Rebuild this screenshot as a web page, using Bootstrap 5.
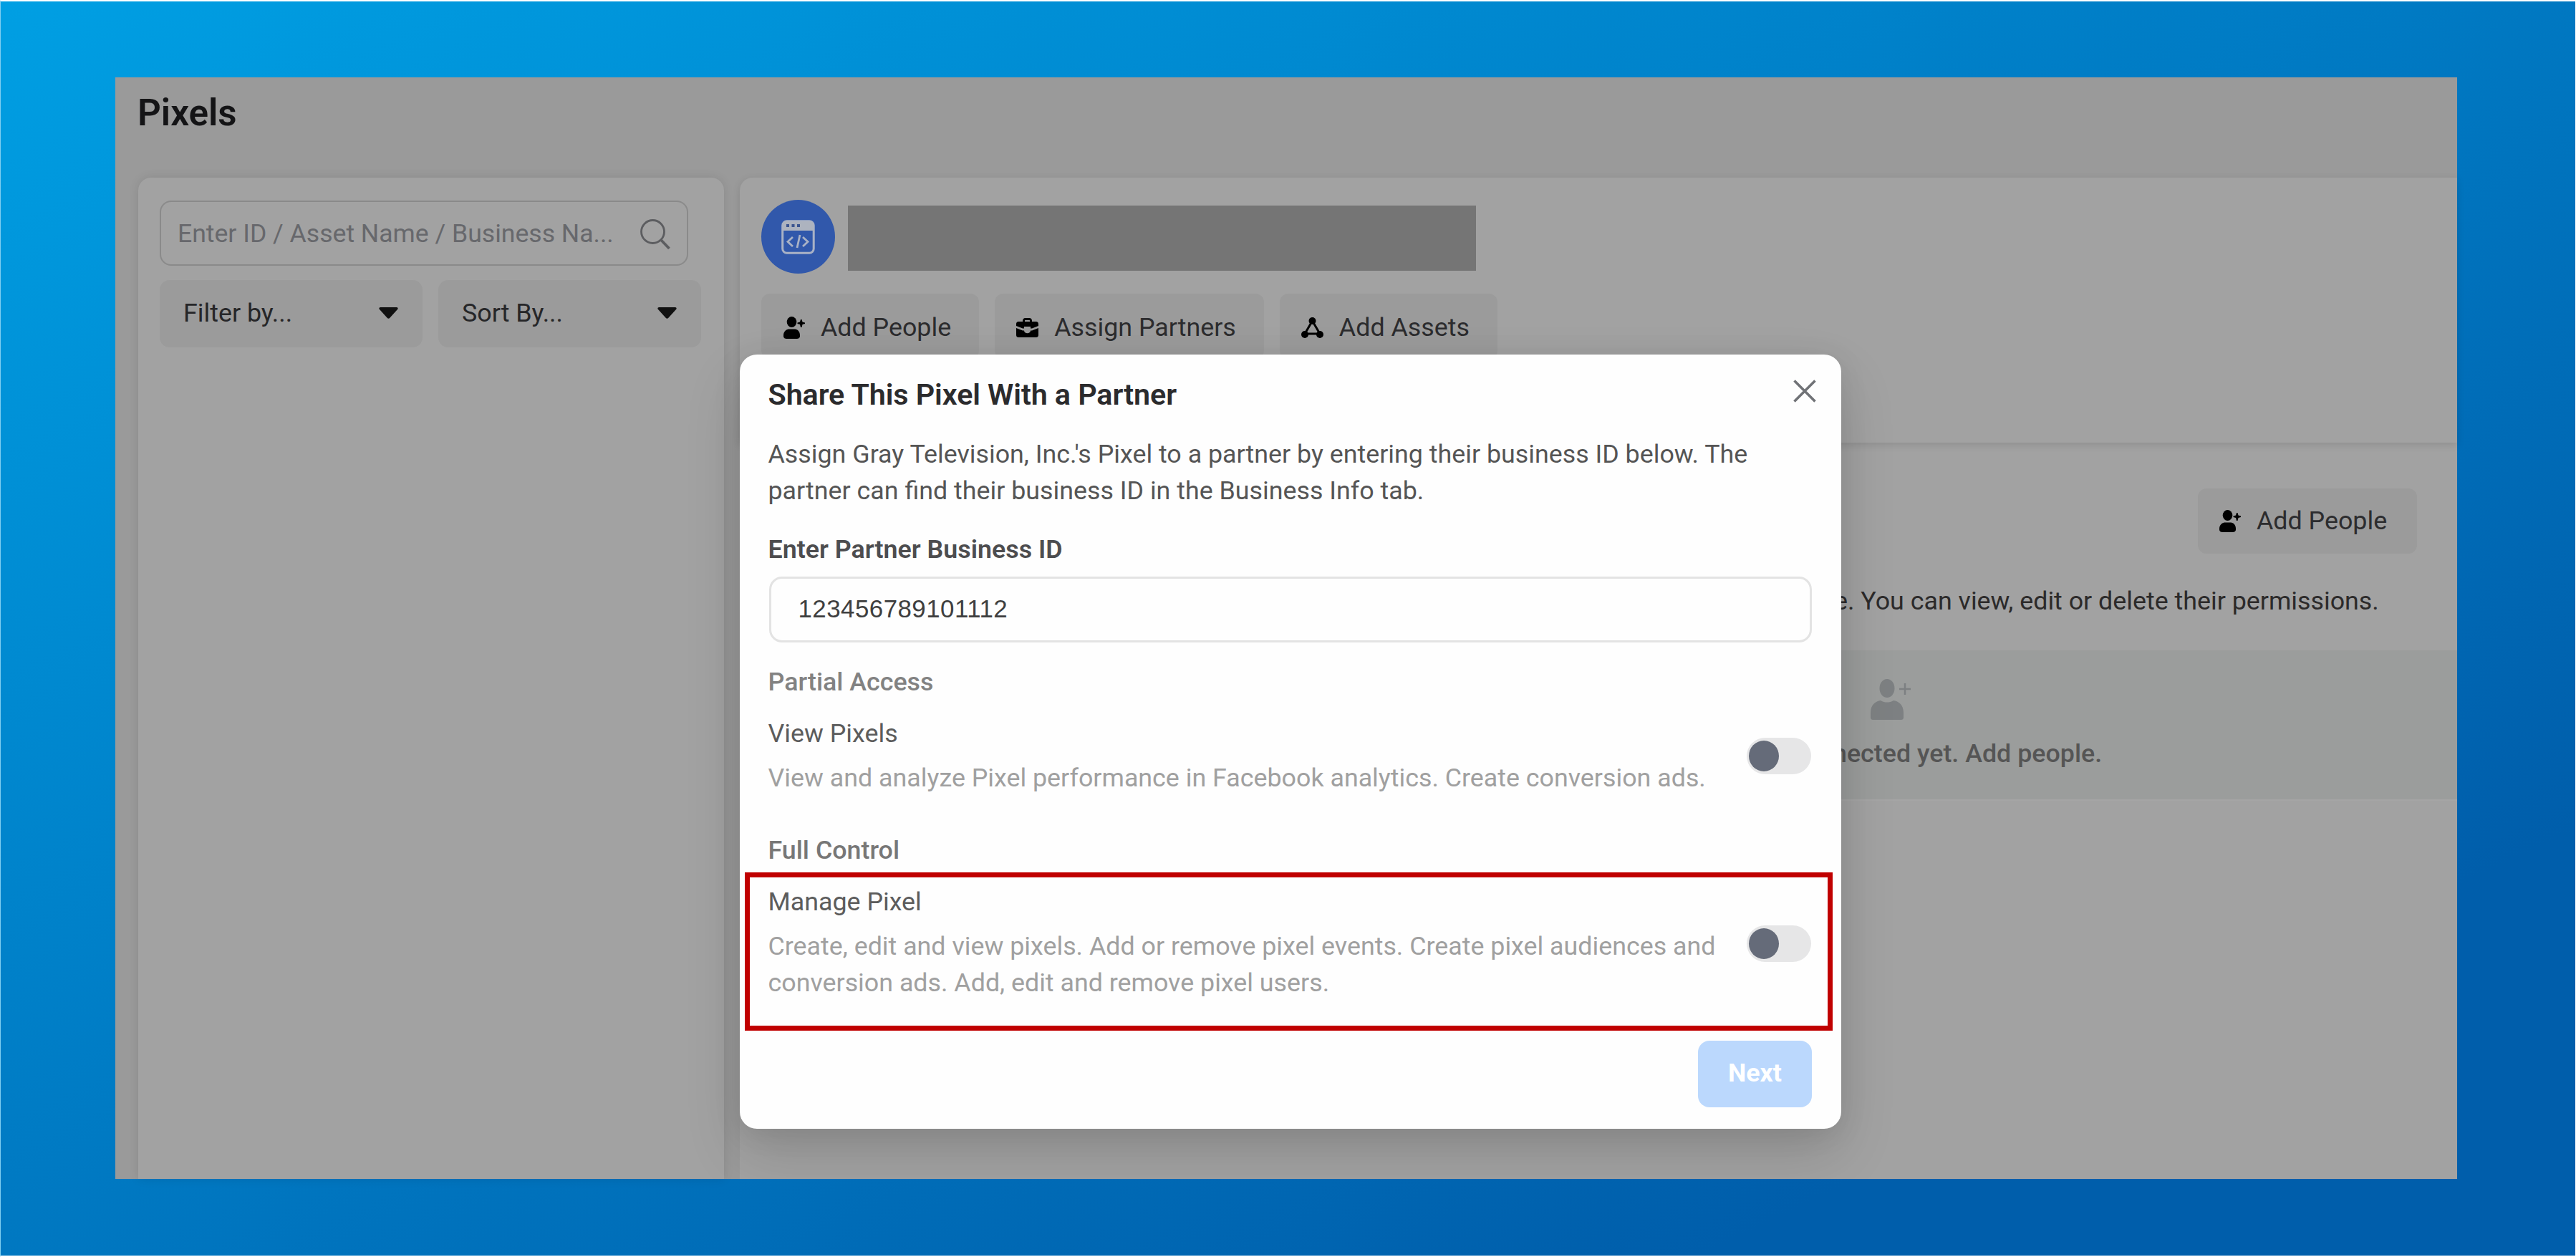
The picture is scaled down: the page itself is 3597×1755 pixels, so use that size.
<!DOCTYPE html>
<html lang="en">
<head>
<meta charset="utf-8">
<meta name="viewport" content="width=device-width, initial-scale=1">
<title>Pixels</title>
<link href="https://cdn.jsdelivr.net/npm/bootstrap@5.3.0/dist/css/bootstrap.min.css" rel="stylesheet">
<style>
  html, body { height: 100%; }
  body { font: 400 35.8px/51px Roboto, sans-serif; color: #262628; overflow: hidden; }
  svg { display: block; flex: none; }
  .stage { height: 1755px; padding: 106px 165px 107px 159.5px; border: solid #fff; border-width: 2px 1px; border-left-color: #80cff1;
    background: linear-gradient(to bottom right, #009fe3 0, #005eab 83%) #005eab; }
  .screen { height: 1538px; background: #9a9a9a; padding: 20px 0 0 32.5px; }
  .screen-title { font-size: 51.2px; line-height: 60px; font-weight: 600; color: #141416; margin: 0 0 60px -1px; }
  .panes { height: 1398px; gap: 22px; }
  .pane { background: #a2a2a2; box-shadow: 0 0 14px rgba(0,0,0,.1); }
  .pane-list { width: 818px; padding: 32px 30px; border-radius: 18px 18px 0 0; }
  .search-box { width: 738px; height: 91px; border: 2px solid #8a8a8a; border-radius: 16px; padding: 2px 22px 0 23px; color: #67686c; font-size: 35.6px; }
  .tools { gap: 22px; margin-top: 20px; }
  .pick { width: 367px; height: 94px; background: #9b9b9b; border-radius: 14px; padding: 0 34px 2px 33px; }
  .pane-head { height: 370px; padding: 31px 0 0 30px; border-radius: 18px 0 0 0; position: relative; z-index: 1; box-shadow: 0 3px 12px rgba(0,0,0,.12); }
  .logo-dot { width: 103px; height: 103px; background: #3158ab; }
  .name-bar { width: 877px; height: 91px; background: #757575; margin: 4px 0 0 18px; }
  .actions { gap: 22px; margin-top: 28px; }
  .act { height: 91px; background: #9b9b9b; border-radius: 12px; color: #2c2c2e; padding: 4px 39px 0 30px; gap: 22px; white-space: nowrap; }
  .pane-body { height: 1028px; background: #a2a2a2; padding-top: 64px; }
  .pane-body .act { margin-right: 56px; width: 306px; padding: 0 0 1px 29px; }
  .note { margin: 41px 0 0 1528px; white-space: nowrap; color: #2c2a2a; }
  .empty-band { height: 210px; margin-top: 43px; background: #9b9d9c; padding-top: 40px; border-bottom: 2px solid #a5a5a5; }
  .empty-band svg { margin-left: 1579px; }
  .empty-text { margin: 22px 0 0 1526px; font-weight: 500; color: #555; white-space: nowrap; }
  .clip { z-index: 2; left: 160px; top: 108px; width: 3272px; height: 1538px; overflow: hidden; }
  .share-box { left: 873px; top: 387px; width: 1538px; height: 1081px; background: #fefefe; border-radius: 24px; padding: 31px 41px 0 39.500px; color: #555;
    box-shadow: 0 34px 80px rgba(0,0,0,.14), 0 6px 40px rgba(0,0,0,.08); }
  .share-title { font-size: 41.3px; line-height: 50px; font-weight: 600; color: #2b2b2d; margin: 0 0 33px; letter-spacing: -.08px; }
  .close-x { margin: 4px -6px 0 0; }
  .label-text { font-weight: 600; margin: 31px 0 12px; color: #4d4d4f; }
  .id-box { height: 92px; width: 1456px; margin-left: 1px; border: 3px solid #e3e3e3; border-radius: 18px; padding: 1px 0 0 38px; font: 34.9px/82px "Liberation Sans", Arial, sans-serif; letter-spacing: .45px; color: #3f3f3f; }
  .section-name { font-weight: 500; color: #828282; margin: 30px 0 21px; }
  .section-full { margin: 50px 0 0; color: #777; }
  .perm-name { color: #5c5c5c; margin-bottom: 11px; }
  .perm-desc { color: #a0a0a0; white-space: nowrap; }
  .toggle { width: 90px; height: 51px; border-radius: 26px; background: #e6e6e7; padding: 4px 3px; margin-right: 1px; }
  .knob { width: 42px; height: 43px; background: #656b79; }
  .hot { margin: 5px -28.5px 0 -32.5px; height: 221px; border: 7px solid #c00000; padding: 9px 22px 0 25.5px; }
  .hot .toggle { margin-top: 58px; }
  .next-btn { width: 159px; height: 93px; margin: 14px 0 0 auto; background: #bbd8fd; border-radius: 16px; color: #fff; font-weight: 700; padding-bottom: 3px; }
</style>
</head>
<body>
<svg width="0" height="0" class="position-absolute">
  <symbol id="person-add" viewBox="0 0 31 31"><ellipse cx="12.5" cy="7.5" rx="6.800" ry="7.500"/><path d="M1 27v-1c0-6 5-8.500 8-8.500h7c4 0 8 2.500 8 8.500v1c0 3-2 4-5 4H6c-3 0-5-1-5-4zM25 4h1.500l1 3.500 3.500 1V10l-3.500 1-1 4H25l-1-4-3.500-1V8.500l3.500-1z"/></symbol>
</svg>
<main class="stage">
  <div class="screen">
    <h1 class="screen-title">Pixels</h1>
    <div class="panes d-flex">
      <aside class="pane pane-list">
        <div class="search-box d-flex align-items-center justify-content-between">
          <span>Enter ID / Asset Name / Business Na...</span>
          <svg width="44" height="44" viewBox="0 0 44 44" fill="none" stroke="#5c5d60" stroke-width="2.800"><circle cx="18.5" cy="18.5" r="16"/><path d="M30 30 41.500 42" stroke-width="3.800"/></svg>
        </div>
        <div class="tools d-flex">
          <div class="pick d-flex align-items-center justify-content-between"><span>Filter by...</span>
            <svg width="27" height="16" viewBox="0 0 28 17" fill="#111"><path d="M2 0h24c2 0 2.500 2 1.300 3.300L16 15.700c-1.200 1.400-2.800 1.400-4 0L.7 3.300C-.5 2 0 0 2 0z"/></svg></div>
          <div class="pick d-flex align-items-center justify-content-between"><span>Sort By...</span>
            <svg width="27" height="16" viewBox="0 0 28 17" fill="#111"><path d="M2 0h24c2 0 2.500 2 1.300 3.300L16 15.700c-1.200 1.400-2.800 1.400-4 0L.7 3.300C-.5 2 0 0 2 0z"/></svg></div>
        </div>
      </aside>
      <div class="flex-grow-1">
        <section class="pane pane-head">
          <div class="d-flex align-items-center">
            <div class="logo-dot rounded-circle d-flex align-items-center justify-content-center">
              <svg width="47" height="48" viewBox="0 0 47 48" fill="none" stroke="#a9b2c6" stroke-width="3"><rect x="1.700" y="1.700" width="43.500" height="44.500" rx="6"/><path d="M2 6c0-3 2-4 4-4h35c2 0 4 1 4 4v9H2z" fill="#adb3bf" stroke="none"/><path d="M7 8h4M14.500 8h4M22 8h4" stroke="#3b5590" stroke-width="4"/><path d="m16 24-7 6.500 7 6.500M30 24l7 6.500-7 6.500M26 21l-4 18" stroke-width="2.800"/></svg>
            </div>
            <div class="name-bar"></div>
          </div>
          <div class="actions d-flex">
            <div class="act d-flex align-items-center"><svg width="31" height="31" fill="#000"><use href="#person-add"/></svg>Add People</div>
            <div class="act d-flex align-items-center"><svg width="31" height="27" viewBox="0 0 31 27" fill="#000"><path d="M9 5V4c0-2 1-4 4-4h5c3 0 4 2 4 4v1h5c3 0 4 1 4 4v2l-9 3.500h-2V12h-9v2.500H9L0 11V9c0-3 1-4 4-4zM12 5h7V4c0-1 0-1-1-1h-5c-1 0-1 0-1 1zM0 14l9 3.500h2c0 5 9 5 9 0h2l9-3.500v9c0 3-1 4-4 4H4c-3 0-4-1-4-4z"/></svg>Assign Partners</div>
            <div class="act d-flex align-items-center"><svg width="31" height="29" viewBox="0 0 31 29" fill="#000"><circle cx="15.500" cy="5" r="5"/><circle cx="5" cy="24" r="5"/><circle cx="26" cy="24" r="5"/><path d="M15.500 5 5 23h21z" fill="none" stroke="#000" stroke-width="3"/></svg>Add Assets</div>
          </div>
        </section>
        <section class="pane-body">
          <div class="d-flex justify-content-end"><div class="act d-flex align-items-center"><svg width="31" height="31" fill="#000"><use href="#person-add"/></svg>Add People</div></div>
          <p class="note">e. You can view, edit or delete their permissions.</p>
          <div class="empty-band">
            <svg width="57" height="57" viewBox="0 0 57 57" fill="#7d8082"><ellipse cx="23" cy="13" rx="10.500" ry="13"/><path d="M0 53v-6c0-11 7-16 14-17 3 2 6 2.500 9 2.500s6-.5 9-2.500c7 1 14 6 14 17v6c0 3-1 4-4 4H4c-3 0-4-1-4-4z"/><path d="M48 6v16M40 14h16" stroke="#7d8082" stroke-width="2.500"/></svg>
            <p class="empty-text">nected yet. Add people.</p>
          </div>
        </section>
      </div>
    </div>
  </div>
</main>
<div class="clip position-absolute">
  <div class="share-box position-absolute">
    <div class="d-flex justify-content-between">
      <h2 class="share-title">Share This Pixel With a Partner</h2>
      <svg width="32" height="32" viewBox="0 0 32 32" class="close-x" fill="none" stroke="#707276" stroke-width="3.600"><path d="m1.500 1.500 29 29M30.500 1.500l-29 29"/></svg>
    </div>
    <p class="m-0">Assign Gray Television, Inc.'s Pixel to a partner by entering their business ID below. The<br>partner can find their business ID in the Business Info tab.</p>
    <div class="label-text">Enter Partner Business ID</div>
    <div class="id-box">123456789101112</div>
    <div class="section-name">Partial Access</div>
    <div class="d-flex justify-content-between align-items-center">
      <div><div class="perm-name">View Pixels</div><div class="perm-desc">View and analyze Pixel performance in Facebook analytics. Create conversion ads.</div></div>
      <div class="toggle"><div class="knob rounded-circle"></div></div>
    </div>
    <div class="section-name section-full">Full Control</div>
    <div class="hot d-flex justify-content-between align-items-start">
      <div><div class="perm-name">Manage Pixel</div><div class="perm-desc">Create, edit and view pixels. Add or remove pixel events. Create pixel audiences and<br>conversion ads. Add, edit and remove pixel users.</div></div>
      <div class="toggle"><div class="knob rounded-circle"></div></div>
    </div>
    <div class="next-btn d-flex align-items-center justify-content-center">Next</div>
  </div>
</div>
<script src="https://cdn.jsdelivr.net/npm/bootstrap@5.3.0/dist/js/bootstrap.bundle.min.js"></script>
</body>
</html>
